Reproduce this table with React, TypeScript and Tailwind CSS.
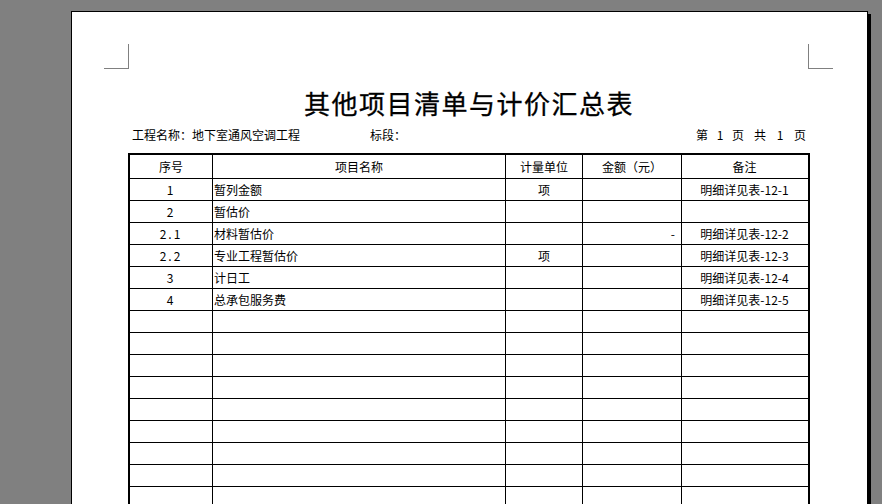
const rows = [
  { no: "1", name: "暂列金额", unit: "项", amount: "", note: "明细详见表-12-1" },
  { no: "2", name: "暂估价", unit: "", amount: "", note: "" },
  { no: "2.1", name: "材料暂估价", unit: "", amount: "-", note: "明细详见表-12-2" },
  { no: "2.2", name: "专业工程暂估价", unit: "项", amount: "", note: "明细详见表-12-3" },
  { no: "3", name: "计日工", unit: "", amount: "", note: "明细详见表-12-4" },
  { no: "4", name: "总承包服务费", unit: "", amount: "", note: "明细详见表-12-5" },
];

// blank lines to fill the rest of the sheet
const blanks = Array.from({ length: 9 }, (_, i) => i);

const font = "font-['SimSun','Noto_Sans_CJK_SC',sans-serif]";

const App = () => {
  return (
    <div className={`h-[504px] overflow-hidden bg-[#808080] pl-[71px] pt-[11px] text-black ${font}`}>
      <div className="flex h-[560px] w-[797px] flex-col border border-black bg-white shadow-[3px_3px_0_#000]">
        {/* crop marks */}
        <div className="flex justify-between pl-[32px] pr-[34px] pt-[32px]">
          <div className="h-[25px] w-[25px] border-b border-r border-[#808080]" />
          <div className="h-[25px] w-[25px] border-b border-l border-[#808080]" />
        </div>

        <div className="flex flex-col pl-[56px] pr-[57px]">
          <h1 className="mt-[19px] text-center text-[26px] font-normal leading-[30px] tracking-[1.5px] [-webkit-text-stroke:0.3px_black]">
            其他项目清单与计价汇总表
          </h1>

          <div className="mt-[9px] flex items-center pl-[4px] pr-[4px] text-[12px] leading-[16px]">
            <span className="w-[238px]">工程名称：地下室通风空调工程</span>
            <span>标段：</span>
            <div className="ml-auto flex">
              <span className="w-[12px]">第</span>
              <span className="w-[24px] text-center">1</span>
              <span className="w-[12px]">页</span>
              <span className="w-[10px]" />
              <span className="w-[12px]">共</span>
              <span className="w-[28px] text-center">1</span>
              <span className="w-[12px]">页</span>
            </div>
          </div>

          {/* table */}
          <div className="mt-[10px] border-2 border-b-0 border-black text-[12px]">
            <div className="flex h-[24px] border-b border-black leading-[23px]">
              <div className="w-[83px] border-r border-black text-center">序号</div>
              <div className="w-[293px] border-r border-black text-center">项目名称</div>
              <div className="w-[77px] border-r border-black text-center">计量单位</div>
              <div className="w-[99px] border-r border-black text-center">金额（元）</div>
              <div className="w-[125px] text-center">备注</div>
            </div>
            {rows.map((r) => (
              <div key={r.no} className="flex h-[22px] border-b border-black leading-[21px]">
                <div className="w-[83px] border-r border-black text-center tracking-[2px]">{r.no}</div>
                <div className="w-[293px] border-r border-black pl-px">{r.name}</div>
                <div className="w-[77px] border-r border-black text-center">{r.unit}</div>
                <div className="w-[99px] border-r border-black pr-[6px] text-right">{r.amount}</div>
                <div className="w-[125px] text-center">{r.note}</div>
              </div>
            ))}
            {blanks.map((i) => (
              <div key={i} className="flex h-[22px] border-b border-black">
                <div className="w-[83px] border-r border-black" />
                <div className="w-[293px] border-r border-black" />
                <div className="w-[77px] border-r border-black" />
                <div className="w-[99px] border-r border-black" />
                <div className="w-[125px]" />
              </div>
            ))}
          </div>
        </div>
      </div>
    </div>
  );
};

export default App;
